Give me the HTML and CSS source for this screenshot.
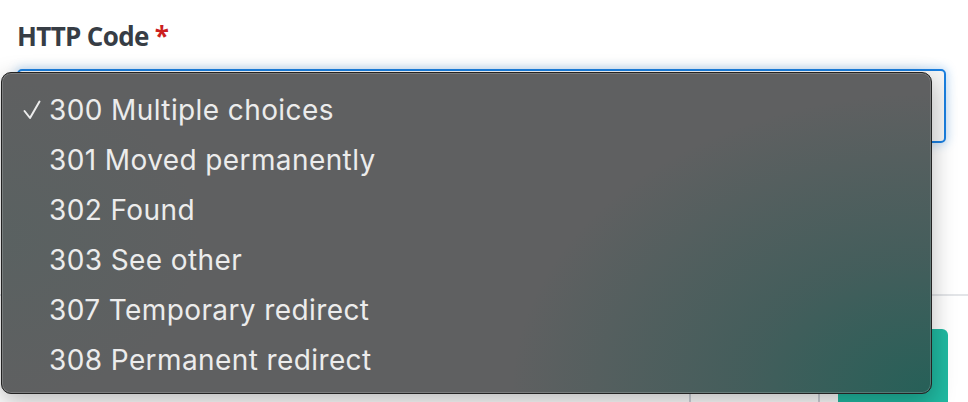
FILE: index.html
```html
<!DOCTYPE html>
<html>
<head>
<meta charset="utf-8">
<link rel="stylesheet" href="styles.css">
</head>
<body>
<div class="page">
  <div class="field">
    <label class="label">HTTP Code <span class="req">*</span></label>
    <div class="select"></div>
  </div>
  <div class="spacer"></div>
  <div class="footer">
    <button class="btn btn-outline"></button>
    <button class="btn btn-primary"></button>
  </div>
  <ul class="menu">
    <li class="item selected"><svg class="check" viewBox="0 0 18 20" width="18" height="20"><path d="M1.5 11 L7 18 L16.5 1.5" fill="none" stroke="#ececec" stroke-width="2" stroke-linecap="round" stroke-linejoin="round"/></svg>300 Multiple choices</li>
    <li class="item">301 Moved permanently</li>
    <li class="item">302 Found</li>
    <li class="item">303 See other</li>
    <li class="item">307 Temporary redirect</li>
    <li class="item">308 Permanent redirect</li>
  </ul>
</div>
</body>
</html>
```
FILE: styles.css
```css
html, body {
  margin: 0;
  padding: 0;
  background: #ffffff;
  overflow: hidden;
}
.page {
  position: relative;
  width: 968px;
  height: 402px;
  display: flex;
  flex-direction: column;
}
.page > * {
  flex-shrink: 0;
}
.field {
  padding: 19px 22px 0 17px;
  display: flex;
  flex-direction: column;
}
.label {
  font-family: "Open Sans", sans-serif;
  font-weight: 700;
  font-size: 26px;
  letter-spacing: -0.65px;
  line-height: 34px;
  color: #373d45;
  height: 34px;
}
.req {
  color: #cc1f1f;
}
.select {
  margin-top: 16px;
  height: 70px;
  border: 2px solid #1a7fe0;
  border-radius: 5px;
  background: #f6f6f6;
  box-shadow: 0 0 10px 2px rgba(26, 127, 224, 0.25);
}
.spacer {
  height: 151px;
  border-bottom: 2px solid #e3e5e8;
}
.footer {
  display: flex;
  justify-content: flex-end;
  gap: 18px;
  padding: 33px 20px 0 0;
}
.btn {
  height: 80px;
  border-radius: 6px;
  padding: 0;
}
.btn-outline {
  width: 131px;
  border: 2px solid #cfd3da;
  background: #fff;
}
.btn-primary {
  width: 110px;
  border: none;
  background: #20b9a1;
}
.menu {
  position: absolute;
  left: 1px;
  top: 72px;
  width: 931px;
  height: 322px;
  margin: 0;
  padding: 12px 0 0 0;
  box-sizing: border-box;
  list-style: none;
  border: 1px solid #232323;
  border-radius: 10px;
  background:
    radial-gradient(ellipse 420px 300px at 100% 100%, rgba(38, 96, 88, 1) 0%, rgba(50, 92, 88, 0.6) 45%, rgba(95, 96, 97, 0) 100%),
    radial-gradient(ellipse 200px 160px at 0% 52%, rgba(80, 100, 98, 0.35) 0%, rgba(95, 96, 97, 0) 100%),
    #5f6061;
  box-shadow: inset 0 0 0 1px rgba(255, 255, 255, 0.18), 0 8px 24px rgba(0, 0, 0, 0.28);
}
.item {
  height: 50px;
  line-height: 50px;
  padding-left: 47px;
  font-family: Inter, "Noto Sans", sans-serif;
  font-size: 28px;
  letter-spacing: 0.4px;
  color: #ececec;
  position: relative;
  white-space: nowrap;
}
.check {
  position: absolute;
  left: 21px;
  top: 15px;
}
```
